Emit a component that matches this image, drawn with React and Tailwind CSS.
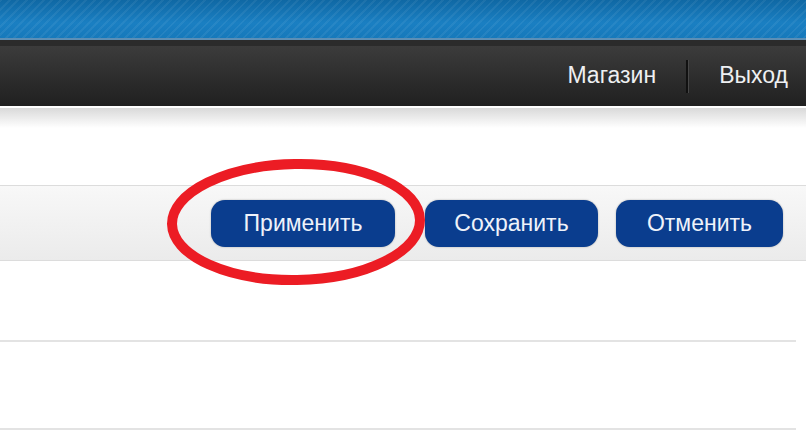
import React from 'react';

const Header = () => (
  <div>
    {/* blue top strip */}
    <div className="h-[38px] bg-[repeating-linear-gradient(135deg,rgba(255,255,255,0.06)_0px,rgba(255,255,255,0.06)_2px,transparent_2px,transparent_6px),linear-gradient(to_bottom,#0f68a4,#1a7fc2_60%,#1679bb)]" />
    <div className="h-[2px] bg-[#5c8fb6]" />

    {/* dark nav */}
    <div className="h-[66px] border-t-[6px] border-[#2b2b2b] bg-gradient-to-b from-[#3c3c3c] to-[#202020] flex items-center justify-end pr-[18px] font-['Liberation_Sans',Arial,sans-serif] text-[23px] text-[#eef0f2]">
      <span className="pb-[2px]">Магазин</span>
      <span className="mx-[30px] h-[33px] w-[3px] border-l-2 border-[#111] border-r border-r-[#474747]" />
      <span className="pb-[2px]">Выход</span>
    </div>
    <div className="h-[2px] bg-white" />
    <div className="h-[20px] bg-gradient-to-b from-[#d9d9d9] to-white" />
  </div>
);

const Btn = ({ w, children }) => (
  <button className={`${w} h-[47px] rounded-[14px] bg-[#0a3d8e] text-[#eef2fa] text-[23px] font-['Liberation_Sans',Arial,sans-serif] flex items-center justify-center shadow-[0_0_2px_rgba(0,0,0,0.3)]`}>
    {children}
  </button>
);

export default function App() {
  return (
    <div className="relative w-[806px] h-[440px] overflow-hidden bg-white">
      <Header />

      <div className="mt-[57px] h-[76px] border-y border-[#dcdcdc] bg-gradient-to-b from-[#f8f8f8] to-[#ebebeb] flex items-center justify-end pr-[23px]">
        <Btn w="w-[184px]">Применить</Btn>
        <div className="w-[30px]" />
        <Btn w="w-[173px]">Сохранить</Btn>
        <div className="w-[18px]" />
        <Btn w="w-[167px]">Отменить</Btn>
      </div>

      <div className="mt-[79px] mr-[10px] border-t-2 border-[#e3e3e3]" />
      <div className="mt-[86px] mr-[10px] border-t-2 border-[#e3e3e3]" />

      {/* red highlight ring */}
      <svg className="absolute left-[165px] top-[156px]" width="264" height="132" viewBox="0 0 264 132">
        <ellipse cx="131" cy="66" rx="124" ry="58" fill="none" stroke="#ec1c24" strokeWidth="10" transform="rotate(-1 131 66)" />
      </svg>
    </div>
  );
}
